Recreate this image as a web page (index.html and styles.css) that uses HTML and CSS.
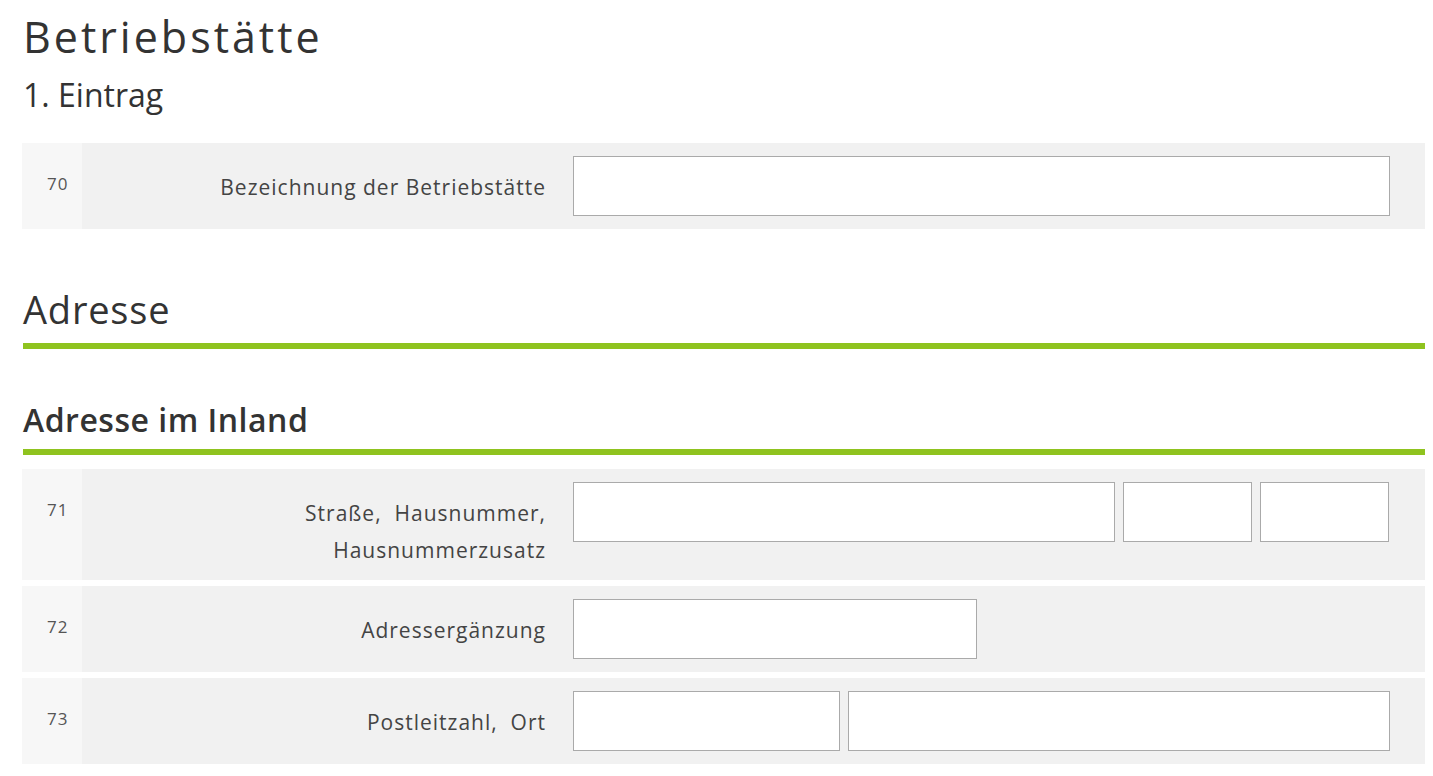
FILE: index.html
```html
<!DOCTYPE html>
<html lang="de">
<head>
<meta charset="utf-8">
<title>Betriebstätte</title>
<link rel="stylesheet" href="styles.css">
</head>
<body>
<main class="page">
  <h1 class="title">Betriebstätte</h1>
  <p class="subtitle">1. Eintrag</p>

  <div class="field-row">
    <div class="field-no">70</div>
    <label class="field-label">Bezeichnung der Betriebstätte</label>
    <div class="field-inputs">
      <input class="input w-full" type="text">
    </div>
  </div>

  <h2 class="section-title">Adresse</h2>
  <h3 class="subsection-title">Adresse im Inland</h3>

  <div class="field-group">
    <div class="field-row">
      <div class="field-no">71</div>
      <label class="field-label">Straße,&nbsp; Hausnummer,<br>Hausnummerzusatz</label>
      <div class="field-inputs">
        <input class="input w-street" type="text">
        <input class="input w-hnr" type="text">
        <input class="input w-hnr" type="text">
      </div>
    </div>
    <div class="field-row">
      <div class="field-no">72</div>
      <label class="field-label">Adressergänzung</label>
      <div class="field-inputs">
        <input class="input w-half" type="text">
      </div>
    </div>
    <div class="field-row">
      <div class="field-no">73</div>
      <label class="field-label">Postleitzahl,&nbsp; Ort</label>
      <div class="field-inputs">
        <input class="input w-plz" type="text">
        <input class="input w-ort" type="text">
      </div>
    </div>
  </div>
</main>
</body>
</html>
```

FILE: styles.css
```css
* {
  box-sizing: border-box;
}

body {
  margin: 0;
  background: #ffffff;
  font-family: "Open Sans", "Noto Sans", sans-serif;
  color: #333333;
}

.page {
  padding: 7px 8px 0 22px;
}

.title {
  margin: 0 0 0 1px;
  font-size: 43px;
  font-weight: 400;
  line-height: normal;
  letter-spacing: 3px;
  color: #333333;
}

.subtitle {
  margin: 7px 0 27px 1px;
  font-size: 32px;
  line-height: normal;
  color: #333333;
}

.section-title {
  margin: 54px 0 0 1px;
  padding-bottom: 8px;
  font-size: 38px;
  font-weight: 400;
  line-height: normal;
  letter-spacing: 0.8px;
  border-bottom: 6px solid #8fc31f;
}

.subsection-title {
  margin: 49px 0 14px 1px;
  padding-bottom: 8px;
  font-size: 32px;
  font-weight: 600;
  line-height: normal;
  letter-spacing: 0.5px;
  border-bottom: 6px solid #8fc31f;
}

.field-group {
  display: flex;
  flex-direction: column;
  gap: 6px;
}

.field-row {
  display: flex;
  align-items: stretch;
  background: #f1f1f1;
}

.field-no {
  flex: 0 0 60px;
  background: #f7f7f7;
  padding: 31px 0 0 25px;
  font-size: 17px;
  line-height: 20px;
  letter-spacing: 1px;
  color: #555555;
}

.field-label {
  flex: 0 0 478px;
  padding: 26px 14px 11px 0;
  text-align: right;
  font-size: 21px;
  line-height: 37px;
  letter-spacing: 1px;
  color: #444444;
}

.field-inputs {
  flex: 1;
  display: flex;
  gap: 8px;
  padding: 13px 35px 13px 13px;
  align-items: flex-start;
}

.input {
  height: 60px;
  border: 1px solid #aaaaaa;
  background: #ffffff;
  border-radius: 0;
  font: inherit;
  padding: 0 10px;
}

.w-full { width: 817px; }
.w-street { width: 542px; }
.w-hnr { width: 129px; }
.w-half { width: 404px; }
.w-plz { width: 267px; }
.w-ort { width: 542px; }
```
